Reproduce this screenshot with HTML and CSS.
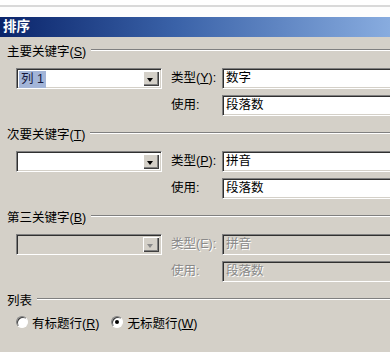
FILE: index.html
```html
<!DOCTYPE html>
<html lang="zh-CN">
<head>
  <meta charset="UTF-8">
  <title>排序</title>
  <link rel="stylesheet" href="styles.css">
</head>
<body>
  <div class="chrome"></div>
  <div class="titlebar">排序</div>
  <div class="dialog">
    <section class="group">
      <div class="group-head"><span>主要关键字(<u>S</u>)</span></div>
      <div class="rows">
        <div class="combo"><span class="value"><span class="sel">列 1</span></span><span class="drop"></span></div>
        <label class="lbl">类型(<u>Y</u>):</label>
        <div class="field">数字</div>
        <div></div>
        <label class="lbl">使用:</label>
        <div class="field">段落数</div>
      </div>
    </section>

    <section class="group">
      <div class="group-head"><span>次要关键字(<u>T</u>)</span></div>
      <div class="rows">
        <div class="combo"><span class="value"></span><span class="drop"></span></div>
        <label class="lbl">类型(<u>P</u>):</label>
        <div class="field">拼音</div>
        <div></div>
        <label class="lbl">使用:</label>
        <div class="field">段落数</div>
      </div>
    </section>

    <section class="group">
      <div class="group-head"><span>第三关键字(<u>B</u>)</span></div>
      <div class="rows disabled">
        <div class="combo"><span class="value"></span><span class="drop"></span></div>
        <label class="lbl">类型(E):</label>
        <div class="field">拼音</div>
        <div></div>
        <label class="lbl">使用:</label>
        <div class="field">段落数</div>
      </div>
    </section>

    <section class="group">
      <div class="group-head"><span>列表</span></div>
      <div class="radios">
        <label class="radio"><span class="dot"></span><span>有标题行(<u>R</u>)</span></label>
        <label class="radio checked"><span class="dot"></span><span>无标题行(<u>W</u>)</span></label>
      </div>
    </section>
  </div>
</body>
</html>
```

FILE: styles.css
```css
body {
  margin: 0;
  width: 390px;
  height: 352px;
  overflow: hidden;
  background-color: #d4d0c8;
  font-family: "Liberation Sans", "Noto Sans CJK SC", sans-serif;
  font-size: 12.5px;
  color: #000;
}
u {
  text-decoration: underline;
  text-underline-offset: 1px;
}
.chrome {
  height: 17px;
  background: linear-gradient(#fff 5px, #d9d9d9 5px, #d9d9d9 7px, #fdfdfd 7px);
}
.titlebar {
  height: 20px;
  line-height: 20px;
  padding-left: 3px;
  color: #fff;
  font-weight: bold;
  font-size: 13.5px;
  background: linear-gradient(to right, #0a246a, #3a62a8 45%, #88acdf);
}
.dialog {
  padding: 5px 0 0 7px;
}
.group {
  margin-bottom: 9px;
}
.group-head {
  display: flex;
  align-items: center;
  height: 16px;
}
.group-head::after {
  content: "";
  flex: 1;
  margin-left: 5px;
  border-top: 1px solid #808080;
  border-bottom: 1px solid #fff;
}
.rows {
  display: grid;
  grid-template-columns: 155px 51px 1fr;
  grid-auto-rows: 21px;
  row-gap: 6px;
  margin: 10px -6px 0 9px;
}
.lbl {
  line-height: 21px;
  white-space: nowrap;
}
.field,
.combo {
  box-sizing: border-box;
  height: 21px;
  background-color: #fff;
  border: 1px solid;
  border-color: #808080 #fff #fff #808080;
  box-shadow: inset 1px 1px #303030, inset -1px -1px #d4d0c8;
}
.field {
  padding: 0 3px;
  line-height: 19px;
}
.combo {
  width: 146px;
  display: flex;
  padding: 2px;
}
.value {
  flex: 1;
  line-height: 17px;
}
.sel {
  display: inline-block;
  padding: 0 2px;
  background-color: #a3b5d8;
  color: #16183c;
}
.drop {
  position: relative;
  width: 16px;
  background-color: #d4d0c8;
  box-shadow: inset 1px 1px #fff, inset -1px -1px #404040, inset -2px -2px #808080;
}
.drop::after {
  content: "";
  position: absolute;
  left: 4px;
  top: 7px;
  border-left: 3.5px solid transparent;
  border-right: 3.5px solid transparent;
  border-top: 4px solid #000;
}
.disabled .lbl,
.disabled .field {
  color: #8a8a8a;
  text-shadow: 1px 1px #fff;
}
.disabled .field,
.disabled .combo {
  background-color: #d4d0c8;
}
.disabled .drop::after {
  border-top-color: #8a8a8a;
}
.radios {
  display: flex;
  gap: 12px;
  margin: 7px 0 0 9px;
  height: 16px;
  align-items: center;
}
.radio {
  display: flex;
  align-items: center;
  gap: 4px;
}
.radio .dot {
  position: relative;
  box-sizing: border-box;
  width: 12px;
  height: 12px;
  border-radius: 50%;
  background-color: #fff;
  border: 1px solid;
  border-color: #808080 #fff #fff #808080;
  box-shadow: inset 1px 1px #404040;
}
.radio.checked .dot::after {
  content: "";
  position: absolute;
  left: 3px;
  top: 3px;
  width: 4px;
  height: 4px;
  border-radius: 50%;
  background-color: #000;
}
```
